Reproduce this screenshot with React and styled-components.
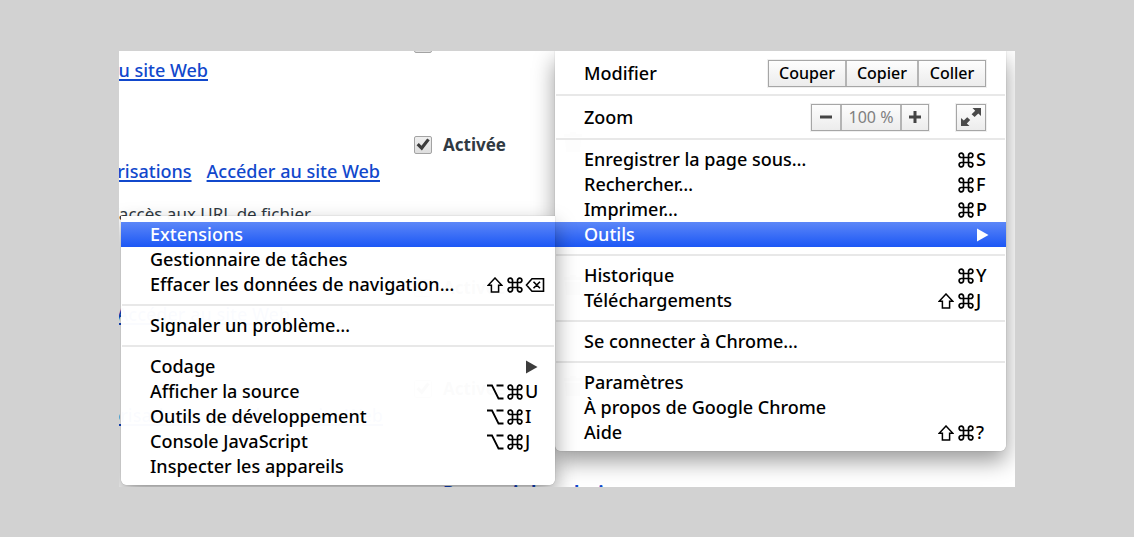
import React from 'react';
import styled, { createGlobalStyle, css } from 'styled-components';

const GlobalStyle = createGlobalStyle`
  * {
    box-sizing: border-box;
  }
  body {
    margin: 0;
    background: #d2d2d2;
    color: #000;
    font-family: 'Noto Sans', 'Open Sans', sans-serif;
    font-size: 18px;
    font-weight: 500;
    line-height: 25px;
  }
  button, input {
    font: inherit;
    color: inherit;
    margin: 0;
  }
`;

const Desktop = styled.div`
  min-height: 100vh;
  padding: 51px 119px 50px;
  display: flex;
`;
const Browser = styled.div`
  position: relative;
  flex: 1;
  overflow: hidden;
  background: #fff;
`;

const ExtensionList = styled.main`
  height: 0;
  margin-top: -20px;
`;
const Extension = styled.section`
  display: grid;
  grid-template-columns: 295px 150px 1fr;
  grid-template-rows: 27px 26px;
  height: ${({ $tall }) => ($tall ? '143px' : '101px')};
`;
const LinkRow = styled.div`
  grid-column: 1;
  grid-row: 2;
  display: flex;
  justify-content: flex-end;
  gap: 15px;
  width: ${({ $end }) => $end}px;
  white-space: nowrap;
`;
const PageLink = styled.a`
  color: #1148cc;
  text-decoration: underline;
  text-decoration-thickness: 2px;
  text-underline-offset: 2px;
`;
const FileAccess = styled.p`
  grid-column: 1;
  grid-row: 3;
  display: flex;
  justify-content: flex-end;
  width: 192px;
  margin: 16px 0 0;
  color: #303942;
  font-size: 17px;
  font-weight: 400;
  white-space: nowrap;
`;
const CheckLabel = styled.label`
  grid-column: 2;
  grid-row: 1;
  display: flex;
  align-items: center;
  align-self: start;
  gap: 11px;
  color: #303942;
  font-size: 17px;
  font-weight: 700;
`;
const CheckBox = styled.input`
  appearance: none;
  width: 18px;
  height: 18px;
  border: 1px solid #a3a3a3;
  border-radius: 2px;
  background: linear-gradient(#efefef, #dedede);
  display: grid;
  place-items: center;
  &:checked::before {
    content: '';
    width: 14px;
    height: 13px;
    background: #3c3c3c;
    clip-path: polygon(4% 55%, 20% 38%, 39% 60%, 80% 4%, 98% 18%, 42% 96%);
  }
`;
const TrashIcon = styled.svg`
  grid-column: 3;
  grid-row: 1;
  width: 18px;
  height: 20px;
`;
const StoreLink = styled.a`
  display: block;
  margin: 3px 0 0 324px;
  color: #1148cc;
  font-weight: 700;
`;

const panel = css`
  position: absolute;
  background: rgba(255, 255, 255, 0.98);
  box-shadow: 0 0 1px rgba(0, 0, 0, 0.4), 0 10px 22px rgba(0, 0, 0, 0.4);
`;
const MainMenu = styled.div`
  ${panel}
  top: 0;
  right: 9px;
  width: 451px;
  padding: 8px 0 6px;
  border-radius: 0 0 6px 6px;
`;
const SubMenu = styled.div`
  ${panel}
  top: -6px;
  right: 100%;
  width: 434px;
  padding: 6px 0;
  border-radius: 0 0 6px 6px;
`;
const Holder = styled.div`
  position: relative;
`;
const Item = styled.button`
  display: flex;
  align-items: center;
  width: 100%;
  height: 25px;
  padding: 0 0 0 29px;
  border: 0;
  background: ${({ $active }) =>
    $active ? 'linear-gradient(#5c87f8, #1c57f5)' : 'none'};
  color: ${({ $active }) => ($active ? '#fff' : '#000')};
  text-align: left;
  white-space: nowrap;
`;
const ItemText = styled.span`
  flex: 1;
`;
const Shortcut = styled.span`
  display: flex;
  align-items: center;
`;
const Key = styled.span`
  display: flex;
  align-items: center;
  width: ${({ $w }) => $w}px;
`;
const Separator = styled.hr`
  height: 2px;
  margin: 7px 1px;
  border: 0;
  background: #e8e8e8;
`;
const ToolRow = styled.div`
  display: flex;
  align-items: center;
  justify-content: space-between;
  height: 28px;
  padding: 0 20px 0 29px;
`;
const Controls = styled.div`
  display: flex;
  gap: 27px;
`;
const ButtonGroup = styled.div`
  display: flex;
  border: 1px solid #a6a6a6;
  outline: 1px solid rgba(0, 0, 0, 0.06);
  && > * + * {
    border-left: 2px solid #b4b4b4;
  }
`;
const ToolButton = styled.button`
  display: grid;
  place-items: center;
  width: ${({ $w }) => $w}px;
  height: 25px;
  padding: 0;
  border: 0;
  background: linear-gradient(#fdfdfd, #ececec);
  font-size: 16px;
`;
const ZoomValue = styled.output`
  width: 60px;
  background: linear-gradient(#fdfdfd, #ececec);
  color: #808080;
  font-size: 16px;
  font-weight: 400;
  text-align: center;
`;

const glyphProps = {
  height: 16,
  fill: 'none',
  stroke: 'currentColor',
  'aria-hidden': true,
};

const Command = () => (
  <svg {...glyphProps} width="16" viewBox="0 0 16 16" strokeWidth="1.7">
    <path d="M5.5 5.5V3.4A2.2 2.2 0 1 0 3.3 5.5H12.7A2.2 2.2 0 1 0 10.5 3.4V12.6A2.2 2.2 0 1 0 12.7 10.5H3.3A2.2 2.2 0 1 0 5.5 12.6Z" />
  </svg>
);
const Shift = () => (
  <svg {...glyphProps} width="16" viewBox="0 0 16 16" strokeWidth="1.5">
    <path d="M8 1 1.2 8.2H4.4V15H11.6V8.2H14.8Z" />
  </svg>
);
const Option = () => (
  <svg {...glyphProps} width="17" viewBox="0 0 17 16" strokeWidth="1.8">
    <path d="M0 1.5H5L11.5 14.5H16.5M9.5 1.5H16.5" />
  </svg>
);
const Erase = () => (
  <svg {...glyphProps} width="20" viewBox="0 0 20 16" strokeWidth="1.6">
    <path d="M1.5 8 7 1.8H18.5V14.2H7ZM8.5 4.7 15 11.3M15 4.7 8.5 11.3" />
  </svg>
);
const Arrow = ({ dark }) => (
  <svg width="14" height="14" viewBox="0 0 14 14" aria-hidden="true">
    <path d="M1 0.5V13.5L12.5 7Z" fill={dark ? '#3c3c3c' : '#fff'} />
  </svg>
);
const FullScreen = () => (
  <svg width="22" height="20" viewBox="0 0 22 20" fill="#4a4a4a" aria-hidden="true">
    <path d="M12.5 1H21V9L18.3 6.6 14.6 10 11.6 7.2 15.2 3.7ZM1 11 3.8 13.5 7.2 10.2 10.2 13 6.8 16.4 9.5 19H1Z" />
  </svg>
);
const Minus = () => (
  <svg width="12" height="12" viewBox="0 0 12 12" aria-hidden="true">
    <path d="M0 6H12" stroke="#444" strokeWidth="3" />
  </svg>
);
const Plus = () => (
  <svg width="12" height="12" viewBox="0 0 12 12" aria-hidden="true">
    <path d="M0 6H12M6 0V12" stroke="#444" strokeWidth="3" />
  </svg>
);

function MenuItem({ label, mod, letter, arrow, active }) {
  return (
    <Item type="button" role="menuitem" $active={active}>
      <ItemText>{label}</ItemText>
      {arrow && (
        <Key $w={30}>
          <Arrow dark={!active} />
        </Key>
      )}
      {letter && (
        <Shortcut>
          {mod && <Key $w={20}>{mod}</Key>}
          <Key $w={18}>
            <Command />
          </Key>
          <Key $w={30}>{letter}</Key>
        </Shortcut>
      )}
    </Item>
  );
}

function ExtensionRow({ end, permissions, fileAccess }) {
  return (
    <Extension $tall={fileAccess}>
      <LinkRow $end={end}>
        {permissions && <PageLink href="#autorisations">Autorisations</PageLink>}
        <PageLink href="#site">Accéder au site Web</PageLink>
      </LinkRow>
      {fileAccess && <FileAccess>Autoriser l'accès aux URL de fichier</FileAccess>}
      <CheckLabel>
        <CheckBox type="checkbox" defaultChecked />
        Activée
      </CheckLabel>
      <TrashIcon viewBox="0 0 18 20" fill="#888" aria-hidden="true">
        <path d="M6 0H12V2H18V5H0V2H6ZM1 7H17L16 20H2Z" />
      </TrashIcon>
    </Extension>
  );
}

function App() {
  return (
    <>
      <GlobalStyle />
      <Desktop>
        <Browser>
          <ExtensionList>
            <ExtensionRow end={89} />
            <ExtensionRow end={261} permissions fileAccess />
            <ExtensionRow end={171} />
            <ExtensionRow end={264} permissions />
            <StoreLink href="#plus">Parcourir la galerie</StoreLink>
          </ExtensionList>

          <MainMenu role="menu">
            <ToolRow>
              <span>Modifier</span>
              <ButtonGroup>
                <ToolButton type="button" $w={76}>Couper</ToolButton>
                <ToolButton type="button" $w={72}>Copier</ToolButton>
                <ToolButton type="button" $w={68}>Coller</ToolButton>
              </ButtonGroup>
            </ToolRow>
            <Separator />
            <ToolRow>
              <span>Zoom</span>
              <Controls>
                <ButtonGroup>
                  <ToolButton type="button" $w={28} aria-label="Zoom arrière">
                    <Minus />
                  </ToolButton>
                  <ZoomValue>100 %</ZoomValue>
                  <ToolButton type="button" $w={28} aria-label="Zoom avant">
                    <Plus />
                  </ToolButton>
                </ButtonGroup>
                <ButtonGroup>
                  <ToolButton type="button" $w={28} aria-label="Plein écran">
                    <FullScreen />
                  </ToolButton>
                </ButtonGroup>
              </Controls>
            </ToolRow>
            <Separator />
            <MenuItem label="Enregistrer la page sous…" letter="S" />
            <MenuItem label="Rechercher…" letter="F" />
            <MenuItem label="Imprimer…" letter="P" />
            <Holder>
              <MenuItem label="Outils" arrow active />
              <SubMenu role="menu">
                <MenuItem label="Extensions" active />
                <MenuItem label="Gestionnaire de tâches" />
                <MenuItem
                  label="Effacer les données de navigation…"
                  mod={<Shift />}
                  letter={<Erase />}
                />
                <Separator />
                <MenuItem label="Signaler un problème…" />
                <Separator />
                <MenuItem label="Codage" arrow />
                <MenuItem label="Afficher la source" mod={<Option />} letter="U" />
                <MenuItem label="Outils de développement" mod={<Option />} letter="I" />
                <MenuItem label="Console JavaScript" mod={<Option />} letter="J" />
                <MenuItem label="Inspecter les appareils" />
              </SubMenu>
            </Holder>
            <Separator />
            <MenuItem label="Historique" letter="Y" />
            <MenuItem label="Téléchargements" mod={<Shift />} letter="J" />
            <Separator />
            <MenuItem label="Se connecter à Chrome…" />
            <Separator />
            <MenuItem label="Paramètres" />
            <MenuItem label="À propos de Google Chrome" />
            <MenuItem label="Aide" mod={<Shift />} letter="?" />
          </MainMenu>
        </Browser>
      </Desktop>
    </>
  );
}

export default App;
